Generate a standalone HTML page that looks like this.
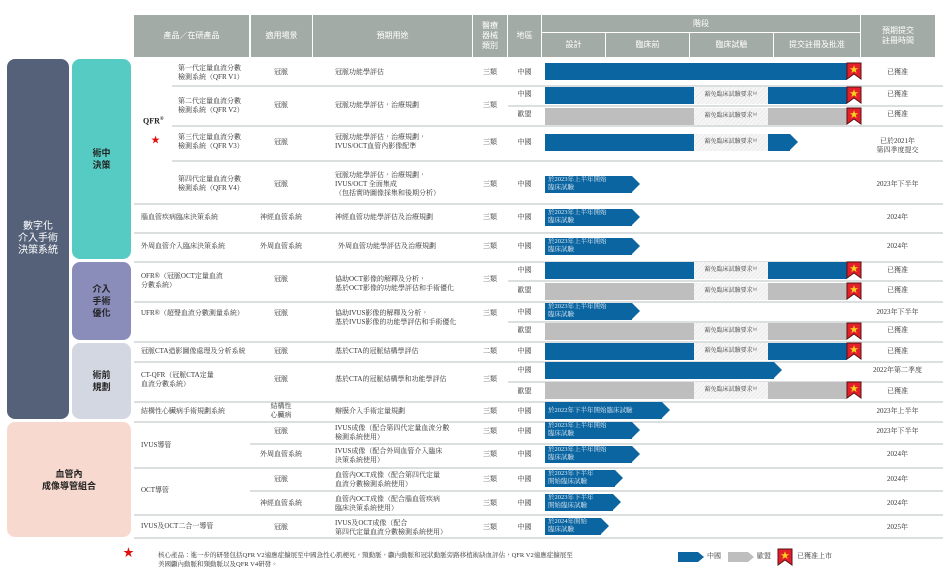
<!DOCTYPE html>
<html><head><meta charset="utf-8">
<style>
*{margin:0;padding:0;box-sizing:border-box}
body{width:943px;height:572px;background:#fff;position:relative;overflow:hidden;font-family:"Liberation Serif","Noto Serif CJK TC","Noto Serif CJK SC",serif;color:#333;font-size:7px;line-height:9px}
.a{position:absolute}
.h{position:absolute;background:#a3aba6;color:#fff;font-family:"Liberation Sans","Noto Sans CJK TC",sans-serif;font-size:8px;line-height:10px;display:flex;align-items:center;justify-content:center;text-align:center}
.ln{position:absolute;height:2px;background:#dcdfdf}
.t{position:absolute;white-space:nowrap}
.c{position:absolute;text-align:center;white-space:nowrap}
.p{position:absolute;border-radius:8px;display:flex;align-items:center;justify-content:center;text-align:center;font-family:"Liberation Sans","Noto Sans CJK TC",sans-serif;font-size:9px;line-height:12px;font-weight:bold}
.b{position:absolute;background:#0b65a1;height:17px}
.g{position:absolute;background:#bdbebd;height:17px}
.w{position:absolute;background:repeating-linear-gradient(135deg,#f6f6f6 0 2px,#ebebeb 2px 3px);height:17px;left:694px;width:74px;font-size:6px;line-height:17px;text-align:center;color:#444}
.ar{position:absolute;height:17px;color:#dfe9f3;font-size:6.5px;line-height:8px;padding-left:3px;white-space:nowrap}
.ar:after{content:"";position:absolute;right:-8px;top:0;border-left:8px solid #0b65a1;border-top:8.5px solid transparent;border-bottom:8.5px solid transparent}
.f{position:absolute;left:846px;width:16px;height:18px}
</style></head><body>

<!-- header -->
<div class="h" style="left:134px;top:15px;width:115px;height:42px">產品／在研產品</div>
<div class="h" style="left:251px;top:15px;width:61px;height:42px">適用場景</div>
<div class="h" style="left:313px;top:15px;width:159px;height:42px">預期用途</div>
<div class="h" style="left:473px;top:15px;width:34px;height:42px">醫療<br>器械<br>類別</div>
<div class="h" style="left:508px;top:15px;width:33px;height:42px">地區</div>
<div class="h" style="left:542px;top:15px;width:318px;height:17px">階段</div>
<div class="h" style="left:542px;top:33px;width:63px;height:24px">設計</div>
<div class="h" style="left:606px;top:33px;width:83px;height:24px">臨床前</div>
<div class="h" style="left:690px;top:33px;width:83px;height:24px">臨床試驗</div>
<div class="h" style="left:774px;top:33px;width:86px;height:24px">提交註冊及批准</div>
<div class="h" style="left:861px;top:15px;width:74px;height:42px">預期提交<br>註冊時間</div>

<!-- left panels -->
<div class="p" style="left:7px;top:59px;width:62px;height:360px;background:#546178;color:#fff;font-weight:normal;font-size:10px">數字化<br>介入手術<br>決策系統</div>
<div class="p" style="left:72px;top:59px;width:59px;height:200px;background:#56cbc3;color:#222">術中<br>決策</div>
<div class="p" style="left:72px;top:262px;width:59px;height:78px;background:#8a8cba;color:#222">介入<br>手術<br>優化</div>
<div class="p" style="left:72px;top:343px;width:59px;height:76px;background:#d3d7e2;color:#222">術前<br>規劃</div>
<div class="p" style="left:7px;top:422px;width:124px;height:115px;background:#f8d9cf;color:#222">血管內<br>成像導管組合</div>

<!-- lines -->
<div class="ln" style="left:172px;top:85px;width:771px"></div>
<div class="ln" style="left:508px;top:105px;width:435px"></div>
<div class="ln" style="left:172px;top:125px;width:771px"></div>
<div class="ln" style="left:172px;top:160px;width:771px"></div>
<div class="ln" style="left:134px;top:203px;width:809px"></div>
<div class="ln" style="left:134px;top:232px;width:809px"></div>
<div class="ln" style="left:134px;top:261px;width:809px"></div>
<div class="ln" style="left:508px;top:280px;width:435px"></div>
<div class="ln" style="left:134px;top:301px;width:809px"></div>
<div class="ln" style="left:508px;top:321px;width:435px"></div>
<div class="ln" style="left:134px;top:341px;width:809px"></div>
<div class="ln" style="left:134px;top:361px;width:809px"></div>
<div class="ln" style="left:508px;top:381px;width:435px"></div>
<div class="ln" style="left:134px;top:401px;width:809px"></div>
<div class="ln" style="left:134px;top:421px;width:809px"></div>
<div class="ln" style="left:250px;top:443px;width:693px"></div>
<div class="ln" style="left:134px;top:467px;width:809px"></div>
<div class="ln" style="left:250px;top:490px;width:693px"></div>
<div class="ln" style="left:134px;top:514px;width:809px"></div>
<div class="ln" style="left:134px;top:537px;width:809px"></div>

<!-- product column -->
<div class="t" style="left:143px;top:115px;font-size:8px;font-weight:bold;color:#222">QFR<sup style="font-size:5px">®</sup></div>
<div class="t" style="left:151px;top:136px;color:#e01010;font-size:9px">★</div>
<div class="t" style="left:178px;top:64px">第一代定量血流分數<br>檢測系統（QFR V1）</div>
<div class="t" style="left:178px;top:97px">第二代定量血流分數<br>檢測系統（QFR V2）</div>
<div class="t" style="left:178px;top:133px">第三代定量血流分數<br>檢測系統（QFR V3）</div>
<div class="t" style="left:178px;top:175px">第四代定量血流分數<br>檢測系統（QFR V4）</div>
<div class="t" style="left:141px;top:213px">腦血管疾病臨床決策系統</div>
<div class="t" style="left:141px;top:242px">外周血管介入臨床決策系統</div>
<div class="t" style="left:141px;top:272px">OFR®（冠脈OCT定量血流<br>分數系統）</div>
<div class="t" style="left:141px;top:309px">UFR®（超聲血流分數測量系統）</div>
<div class="t" style="left:141px;top:347px">冠脈CTA造影圖像處理及分析系統</div>
<div class="t" style="left:141px;top:371px">CT-QFR（冠脈CTA定量<br>血流分數系統）</div>
<div class="t" style="left:141px;top:407px">結構性心臟病手術規劃系統</div>
<div class="t" style="left:141px;top:441px">IVUS導管</div>
<div class="t" style="left:141px;top:486px">OCT導管</div>
<div class="t" style="left:141px;top:522px">IVUS及OCT二合一導管</div>

<!-- scene -->
<div class="c" style="left:250px;width:62px;top:68px">冠脈</div>
<div class="c" style="left:250px;width:62px;top:101px">冠脈</div>
<div class="c" style="left:250px;width:62px;top:138px">冠脈</div>
<div class="c" style="left:250px;width:62px;top:180px">冠脈</div>
<div class="c" style="left:250px;width:62px;top:213px">神經血管系統</div>
<div class="c" style="left:250px;width:62px;top:242px">外周血管系統</div>
<div class="c" style="left:250px;width:62px;top:275px">冠脈</div>
<div class="c" style="left:250px;width:62px;top:309px">冠脈</div>
<div class="c" style="left:250px;width:62px;top:347px">冠脈</div>
<div class="c" style="left:250px;width:62px;top:375px">冠脈</div>
<div class="c" style="left:250px;width:62px;top:402px">結構性<br>心臟病</div>
<div class="c" style="left:250px;width:62px;top:427px">冠脈</div>
<div class="c" style="left:250px;width:62px;top:450px">外周血管系統</div>
<div class="c" style="left:250px;width:62px;top:475px">冠脈</div>
<div class="c" style="left:250px;width:62px;top:499px">神經血管系統</div>
<div class="c" style="left:250px;width:62px;top:523px">冠脈</div>

<!-- use -->
<div class="t" style="left:335px;top:68px">冠脈功能學評估</div>
<div class="t" style="left:335px;top:101px">冠脈功能學評估，治療規劃</div>
<div class="t" style="left:335px;top:133px">冠脈功能學評估，治療規劃，<br>IVUS/OCT血管內影像配準</div>
<div class="t" style="left:335px;top:171px">冠脈功能學評估，治療規劃，<br>IVUS/OCT 全面集成<br>（包括實時圖像採集和後期分析）</div>
<div class="t" style="left:335px;top:213px">神經血管功能學評估及治療規劃</div>
<div class="t" style="left:338px;top:242px">外周血管功能學評估及治療規劃</div>
<div class="t" style="left:335px;top:275px">協助OCT影像的解釋及分析，<br>基於OCT影像的功能學評估和手術優化</div>
<div class="t" style="left:335px;top:309px">協助IVUS影像的解釋及分析，<br>基於IVUS影像的功能學評估和手術優化</div>
<div class="t" style="left:335px;top:347px">基於CTA的冠脈結構學評估</div>
<div class="t" style="left:335px;top:375px">基於CTA的冠脈結構學和功能學評估</div>
<div class="t" style="left:335px;top:407px">瓣膜介入手術定量規劃</div>
<div class="t" style="left:335px;top:424px">IVUS成像（配合第四代定量血流分數<br>檢測系統使用）</div>
<div class="t" style="left:335px;top:447px">IVUS成像（配合外周血管介入臨床<br>決策系統使用）</div>
<div class="t" style="left:335px;top:471px">血管內OCT成像（配合第四代定量<br>血流分數檢測系統使用）</div>
<div class="t" style="left:335px;top:495px">血管內OCT成像（配合腦血管疾病<br>臨床決策系統使用）</div>
<div class="t" style="left:335px;top:519px">IVUS及OCT成像（配合<br>第四代定量血流分數檢測系統使用）</div>

<!-- category & region -->
<div class="c" style="left:473px;width:34px;top:68px">三類</div>
<div class="c" style="left:473px;width:34px;top:101px">三類</div>
<div class="c" style="left:473px;width:34px;top:138px">三類</div>
<div class="c" style="left:473px;width:34px;top:180px">三類</div>
<div class="c" style="left:473px;width:34px;top:213px">三類</div>
<div class="c" style="left:473px;width:34px;top:242px">三類</div>
<div class="c" style="left:473px;width:34px;top:275px">三類</div>
<div class="c" style="left:473px;width:34px;top:309px">三類</div>
<div class="c" style="left:473px;width:34px;top:347px">二類</div>
<div class="c" style="left:473px;width:34px;top:375px">三類</div>
<div class="c" style="left:473px;width:34px;top:407px">三類</div>
<div class="c" style="left:473px;width:34px;top:427px">三類</div>
<div class="c" style="left:473px;width:34px;top:450px">三類</div>
<div class="c" style="left:473px;width:34px;top:475px">三類</div>
<div class="c" style="left:473px;width:34px;top:499px">三類</div>
<div class="c" style="left:473px;width:34px;top:523px">三類</div>

<div class="c" style="left:508px;width:33px;top:68px">中國</div>
<div class="c" style="left:508px;width:33px;top:90px">中國</div>
<div class="c" style="left:508px;width:33px;top:110px">歐盟</div>
<div class="c" style="left:508px;width:33px;top:138px">中國</div>
<div class="c" style="left:508px;width:33px;top:180px">中國</div>
<div class="c" style="left:508px;width:33px;top:213px">中國</div>
<div class="c" style="left:508px;width:33px;top:242px">中國</div>
<div class="c" style="left:508px;width:33px;top:266px">中國</div>
<div class="c" style="left:508px;width:33px;top:286px">歐盟</div>
<div class="c" style="left:508px;width:33px;top:308px">中國</div>
<div class="c" style="left:508px;width:33px;top:326px">歐盟</div>
<div class="c" style="left:508px;width:33px;top:347px">中國</div>
<div class="c" style="left:508px;width:33px;top:366px">中國</div>
<div class="c" style="left:508px;width:33px;top:387px">歐盟</div>
<div class="c" style="left:508px;width:33px;top:407px">中國</div>
<div class="c" style="left:508px;width:33px;top:427px">中國</div>
<div class="c" style="left:508px;width:33px;top:450px">中國</div>
<div class="c" style="left:508px;width:33px;top:475px">中國</div>
<div class="c" style="left:508px;width:33px;top:499px">中國</div>
<div class="c" style="left:508px;width:33px;top:523px">中國</div>

<!-- bars -->
<div class="b" style="left:545px;top:63px;width:302px"></div>
<div class="b" style="left:545px;top:87px;width:149px"></div><div class="w" style="top:87px">豁免臨床試驗要求⁽¹⁾</div><div class="b" style="left:768px;top:87px;width:79px"></div>
<div class="g" style="left:545px;top:108px;width:149px"></div><div class="w" style="top:108px">豁免臨床試驗要求⁽¹⁾</div><div class="g" style="left:768px;top:108px;width:79px"></div>
<div class="b" style="left:545px;top:134px;width:149px"></div><div class="w" style="top:134px">豁免臨床試驗要求⁽¹⁾</div><div class="b ar" style="left:768px;top:134px;width:22px"></div>
<div class="b ar" style="left:545px;top:176px;width:87px">於2023年上半年開始<br>臨床試驗</div>
<div class="b ar" style="left:545px;top:209px;width:87px">於2023年上半年開始<br>臨床試驗</div>
<div class="b ar" style="left:545px;top:238px;width:87px">於2023年上半年開始<br>臨床試驗</div>
<div class="b" style="left:545px;top:262px;width:149px"></div><div class="w" style="top:262px">豁免臨床試驗要求⁽¹⁾</div><div class="b" style="left:768px;top:262px;width:79px"></div>
<div class="g" style="left:545px;top:283px;width:149px"></div><div class="w" style="top:283px">豁免臨床試驗要求⁽¹⁾</div><div class="g" style="left:768px;top:283px;width:79px"></div>
<div class="b ar" style="left:545px;top:303px;width:87px">於2023年上半年開始<br>臨床試驗</div>
<div class="g" style="left:545px;top:323px;width:149px"></div><div class="w" style="top:323px">豁免臨床試驗要求⁽¹⁾</div><div class="g" style="left:768px;top:323px;width:79px"></div>
<div class="b" style="left:545px;top:343px;width:149px"></div><div class="w" style="top:343px">豁免臨床試驗要求⁽¹⁾</div><div class="b" style="left:768px;top:343px;width:79px"></div>
<div class="b ar" style="left:545px;top:362px;width:229px"></div>
<div class="g" style="left:545px;top:382px;width:149px"></div><div class="w" style="top:382px">豁免臨床試驗要求⁽¹⁾</div><div class="g" style="left:768px;top:382px;width:79px"></div>
<div class="b ar" style="left:545px;top:402px;width:117px;line-height:17px">於2022年下半年開始臨床試驗</div>
<div class="b ar" style="left:545px;top:422px;width:87px">於2023年上半年開始<br>臨床試驗</div>
<div class="b ar" style="left:545px;top:446px;width:87px">於2023年上半年開始<br>臨床試驗</div>
<div class="b ar" style="left:545px;top:470px;width:70px">於2023年下半年<br>開始臨床試驗</div>
<div class="b ar" style="left:545px;top:494px;width:68px">於2023年下半年<br>開始臨床試驗</div>
<div class="b ar" style="left:545px;top:518px;width:56px">於2024年開始<br>臨床試驗</div>

<!-- flags -->
<svg width="0" height="0" style="position:absolute"><defs><symbol id="fl" viewBox="0 0 16 18"><path d="M1 1H15V17L8 12L1 17Z" fill="#e3202a" stroke="#5a1014" stroke-width="1"/><path d="M8 3.2L9.1 6.2H12.2L9.7 8L10.6 11L8 9.2L5.4 11L6.3 8L3.8 6.2H6.9Z" fill="#f5d21b"/></symbol></defs></svg>
<svg class="f" style="top:62px"><use href="#fl"/></svg>
<svg class="f" style="top:86px"><use href="#fl"/></svg>
<svg class="f" style="top:107px"><use href="#fl"/></svg>
<svg class="f" style="top:261px"><use href="#fl"/></svg>
<svg class="f" style="top:282px"><use href="#fl"/></svg>
<svg class="f" style="top:322px"><use href="#fl"/></svg>
<svg class="f" style="top:342px"><use href="#fl"/></svg>
<svg class="f" style="top:381px"><use href="#fl"/></svg>

<!-- expected -->
<div class="c" style="left:860px;width:75px;top:68px">已獲准</div>
<div class="c" style="left:860px;width:75px;top:90px">已獲准</div>
<div class="c" style="left:860px;width:75px;top:110px">已獲准</div>
<div class="c" style="left:860px;width:75px;top:137px">已於2021年<br>第四季度提交</div>
<div class="c" style="left:860px;width:75px;top:180px">2023年下半年</div>
<div class="c" style="left:860px;width:75px;top:213px">2024年</div>
<div class="c" style="left:860px;width:75px;top:242px">2024年</div>
<div class="c" style="left:860px;width:75px;top:266px">已獲准</div>
<div class="c" style="left:860px;width:75px;top:286px">已獲准</div>
<div class="c" style="left:860px;width:75px;top:308px">2023年下半年</div>
<div class="c" style="left:860px;width:75px;top:326px">已獲准</div>
<div class="c" style="left:860px;width:75px;top:347px">已獲准</div>
<div class="c" style="left:860px;width:75px;top:366px">2022年第二季度</div>
<div class="c" style="left:860px;width:75px;top:387px">已獲准</div>
<div class="c" style="left:860px;width:75px;top:407px">2023年上半年</div>
<div class="c" style="left:860px;width:75px;top:427px">2023年下半年</div>
<div class="c" style="left:860px;width:75px;top:450px">2024年</div>
<div class="c" style="left:860px;width:75px;top:475px">2024年</div>
<div class="c" style="left:860px;width:75px;top:499px">2024年</div>
<div class="c" style="left:860px;width:75px;top:523px">2025年</div>

<!-- footnote -->
<div class="t" style="left:123px;top:548px;color:#e01010;font-size:11px;line-height:11px">★</div>
<div class="t" style="left:158px;top:551px;font-size:6.5px;line-height:9px">核心產品：進一步的研發包括QFR V2適應症擴展至中國急性心肌梗死，頸動脈，顱內動脈和冠狀動脈旁路移植術缺血評估，QFR V2適應症擴展至<br>美國顱內動脈和頸動脈以及QFR V4研發。</div>

<!-- legend -->
<div class="a" style="left:678px;top:552px;width:20px;height:10px;background:#0b65a1"></div>
<div class="a" style="left:698px;top:552px;border-left:6px solid #0b65a1;border-top:5px solid transparent;border-bottom:5px solid transparent"></div>
<div class="t" style="left:707px;top:552px">中國</div>
<div class="a" style="left:728px;top:552px;width:20px;height:10px;background:#bdbebd"></div>
<div class="a" style="left:748px;top:552px;border-left:6px solid #bdbebd;border-top:5px solid transparent;border-bottom:5px solid transparent"></div>
<div class="t" style="left:757px;top:552px">歐盟</div>
<svg class="a" style="left:777px;top:548px" width="16" height="18"><use href="#fl"/></svg>
<div class="t" style="left:797px;top:552px">已獲准上市</div>
</body></html>
